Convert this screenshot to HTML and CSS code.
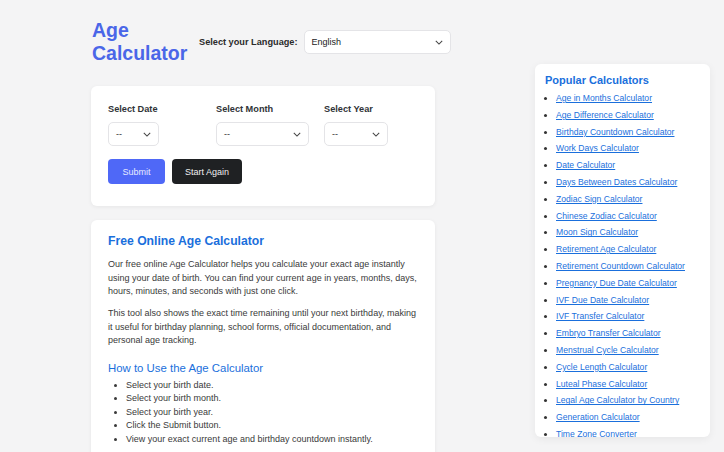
FILE: index.html
```html
<!DOCTYPE html>
<html lang="en">
<head>
<meta charset="utf-8">
<title>Age Calculator</title>
<link rel="stylesheet" href="styles.css">
</head>
<body>
<div class="layout">
  <main class="main">
    <header class="top">
      <h1 class="logo">Age<br>Calculator</h1>
      <label class="lang-label">Select your Language:</label>
      <div class="select lang-select"><span>English</span><svg class="chev" viewBox="0 0 10 6" width="8" height="5"><path d="M1 1l4 4 4-4" fill="none" stroke="#444" stroke-width="1.3"/></svg></div>
    </header>

    <section class="card form-card">
      <div class="fields">
        <div class="field f-date">
          <div class="field-label">Select Date</div>
          <div class="select s-date"><span>--</span><svg class="chev" viewBox="0 0 10 6" width="8" height="5"><path d="M1 1l4 4 4-4" fill="none" stroke="#444" stroke-width="1.3"/></svg></div>
        </div>
        <div class="field f-month">
          <div class="field-label">Select Month</div>
          <div class="select s-month"><span>--</span><svg class="chev" viewBox="0 0 10 6" width="8" height="5"><path d="M1 1l4 4 4-4" fill="none" stroke="#444" stroke-width="1.3"/></svg></div>
        </div>
        <div class="field f-year">
          <div class="field-label">Select Year</div>
          <div class="select s-year"><span>--</span><svg class="chev" viewBox="0 0 10 6" width="8" height="5"><path d="M1 1l4 4 4-4" fill="none" stroke="#444" stroke-width="1.3"/></svg></div>
        </div>
      </div>
      <div class="buttons">
        <button class="btn btn-primary">Submit</button>
        <button class="btn btn-dark">Start Again</button>
      </div>
    </section>

    <section class="card info-card">
      <h2>Free Online Age Calculator</h2>
      <p>Our free online Age Calculator helps you calculate your exact age instantly using your date of birth. You can find your current age in years, months, days, hours, minutes, and seconds with just one click.</p>
      <p>This tool also shows the exact time remaining until your next birthday, making it useful for birthday planning, school forms, official documentation, and personal age tracking.</p>
      <h3>How to Use the Age Calculator</h3>
      <ul>
        <li>Select your birth date.</li>
        <li>Select your birth month.</li>
        <li>Select your birth year.</li>
        <li>Click the Submit button.</li>
        <li>View your exact current age and birthday countdown instantly.</li>
      </ul>
    </section>
  </main>

  <aside class="sidebar">
    <h2>Popular Calculators</h2>
    <ul>
      <li><a href="#">Age in Months Calculator</a></li>
      <li><a href="#">Age Difference Calculator</a></li>
      <li><a href="#">Birthday Countdown Calculator</a></li>
      <li><a href="#">Work Days Calculator</a></li>
      <li><a href="#">Date Calculator</a></li>
      <li><a href="#">Days Between Dates Calculator</a></li>
      <li><a href="#">Zodiac Sign Calculator</a></li>
      <li><a href="#">Chinese Zodiac Calculator</a></li>
      <li><a href="#">Moon Sign Calculator</a></li>
      <li><a href="#">Retirement Age Calculator</a></li>
      <li><a href="#">Retirement Countdown Calculator</a></li>
      <li><a href="#">Pregnancy Due Date Calculator</a></li>
      <li><a href="#">IVF Due Date Calculator</a></li>
      <li><a href="#">IVF Transfer Calculator</a></li>
      <li><a href="#">Embryo Transfer Calculator</a></li>
      <li><a href="#">Menstrual Cycle Calculator</a></li>
      <li><a href="#">Cycle Length Calculator</a></li>
      <li><a href="#">Luteal Phase Calculator</a></li>
      <li><a href="#">Legal Age Calculator by Country</a></li>
      <li><a href="#">Generation Calculator</a></li>
      <li><a href="#">Time Zone Converter</a></li>
    </ul>
  </aside>
</div>
</body>
</html>
```

FILE: styles.css
```css
* { box-sizing: border-box; }
html, body { margin: 0; padding: 0; }
body {
  background: #f4f4f5;
  font-family: "Liberation Sans", Arial, sans-serif;
  color: #333;
  overflow: hidden;
  height: 452px;
}
.layout {
  display: flex;
  align-items: flex-start;
  padding: 0 14px 0 91px;
}
.main {
  width: 344px;
  flex: none;
}
.top {
  display: flex;
  align-items: flex-start;
  padding: 19px 0 0 1px;
  height: 86px;
}
.logo {
  margin: 0;
  font-size: 19.5px;
  line-height: 23px;
  font-weight: bold;
  color: #4a66e8;
  width: 107px;
  flex: none;
}
.lang-label {
  font-size: 9.2px;
  font-weight: bold;
  color: #2b2b2b;
  margin-top: 18px;
  margin-right: 6px;
  white-space: nowrap;
  flex: none;
}
.select {
  display: flex;
  align-items: center;
  justify-content: space-between;
  background: #fff;
  border: 1px solid #e4e4e7;
  border-radius: 5px;
  height: 24px;
  padding: 0 7px 0 7px;
  font-size: 9px;
  color: #333;
}
.chev { flex: none; }
.lang-select {
  width: 147px;
  flex: none;
  margin-top: 11px;
  font-size: 9px;
  color: #222;
}
.card {
  background: #fff;
  border-radius: 6px;
  box-shadow: 0 1px 4px rgba(0,0,0,0.06);
}
.form-card {
  padding: 17px 17px 22px;
  height: 120px;
}
.fields {
  display: flex;
}
.field { width: 108px; flex: none; }
.field-label {
  font-size: 9.2px;
  font-weight: bold;
  color: #2f3337;
  line-height: 12px;
  margin-bottom: 7px;
}
.s-date { width: 51px; }
.s-month { width: 93px; }
.s-year { width: 64px; }
.buttons {
  display: flex;
  gap: 7px;
  margin-top: 13px;
}
.btn {
  height: 25px;
  border: none;
  border-radius: 4px;
  font-family: "Liberation Sans", Arial, sans-serif;
  font-size: 9px;
  padding: 0;
}
.btn-primary { background: #4f68f7; color: #e8ebff; width: 57px; }
.btn-dark { background: #1f2123; color: #f0f0f0; width: 70px; }
.info-card {
  margin-top: 14px;
  padding: 13px 17px 20px;
  height: 260px;
}
.info-card h2 {
  margin: 0 0 9px;
  font-size: 12.2px;
  line-height: 16px;
  color: #1a6fdc;
}
.info-card p {
  margin: 0 0 8.5px;
  font-size: 9px;
  line-height: 13.5px;
  color: #3a3a3a;
}
.info-card h3 {
  margin: 13px 0 3px;
  font-size: 11.4px;
  line-height: 15px;
  font-weight: normal;
  color: #1a6fdc;
}
.info-card ul {
  margin: 0;
  padding-left: 18px;
  font-size: 9px;
  line-height: 13.5px;
  color: #3a3a3a;
}
.sidebar {
  margin-left: auto;
  margin-top: 64px;
  width: 175px;
  height: 373px;
  overflow: hidden;
  background: #fff;
  border-radius: 6px;
  box-shadow: 0 2px 8px rgba(0,0,0,0.06);
  padding: 9px 10px 0;
}
.sidebar h2 {
  margin: 0 0 6px;
  font-size: 11px;
  line-height: 14px;
  color: #1a6fdc;
}
.sidebar ul {
  margin: 0;
  padding-left: 11px;
  font-size: 8.6px;
  line-height: 11px;
}
.sidebar li {
  margin-bottom: 5.8px;
}
.sidebar li::marker { color: #333; }
.sidebar a { color: #1a6fdc; }
```
